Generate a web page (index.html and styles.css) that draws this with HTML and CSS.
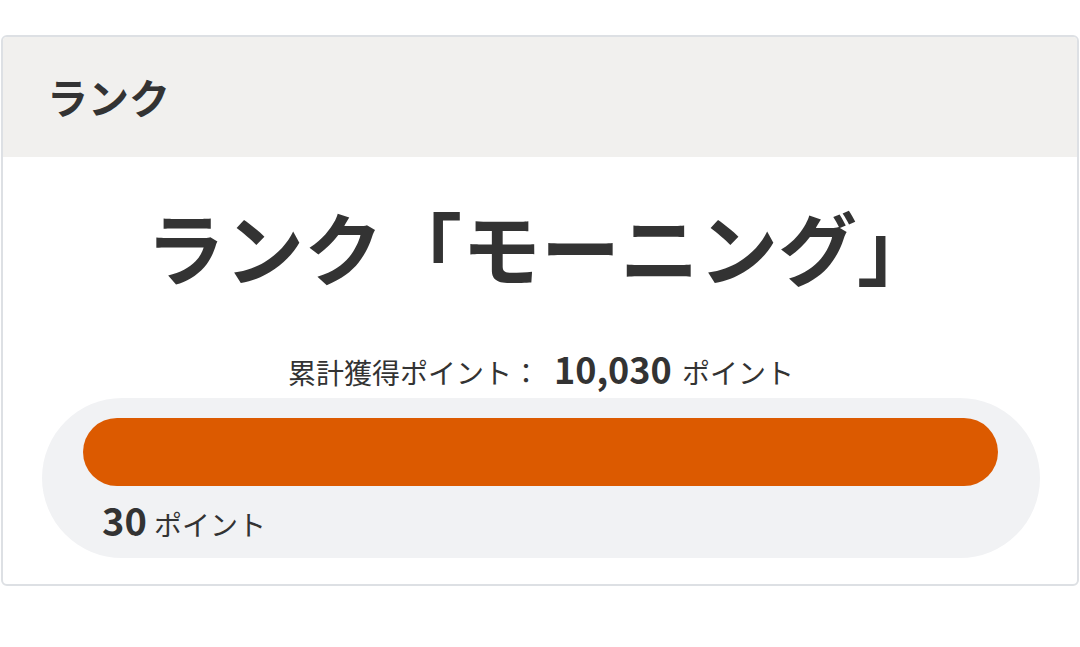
FILE: index.html
```html
<!DOCTYPE html>
<html lang="ja">
<head>
<meta charset="utf-8">
<link rel="stylesheet" href="styles.css">
</head>
<body>
<section class="card">
  <header class="card-header">
    <h2 class="card-title">ランク</h2>
  </header>
  <div class="card-body">
    <p class="rank-name">ランク「モーニング」</p>
    <p class="total">累計獲得ポイント：<span class="total-num">10,030</span> ポイント</p>
    <div class="progress">
      <div class="progress-track">
        <div class="progress-bar" style="width:100%"></div>
      </div>
      <p class="progress-label"><span class="progress-num">30</span> ポイント</p>
    </div>
  </div>
</section>
</body>
</html>
```
FILE: styles.css
```css
* { box-sizing: border-box; }
html, body { margin: 0; padding: 0; background: #ffffff; }
body {
  font-family: "Noto Sans CJK JP", "Noto Sans", sans-serif;
  color: #333333;
  padding: 35px 1px 0 1px;
}
.card {
  border: 2px solid #dde0e4;
  border-radius: 6px;
  overflow: hidden;
  height: 551px;
}
.card-header {
  background: #f1f0ee;
  height: 120px;
  display: flex;
  align-items: center;
  padding-left: 44px;
}
.card-title {
  margin: 0;
  font-size: 41px;
  font-weight: 700;
  line-height: 1.2;
}
.card-body {
  padding: 42px 37px 25px 39px;
}
.rank-name {
  margin: 0;
  text-align: center;
  font-size: 79px;
  font-weight: 700;
  line-height: 94px;
}
.total {
  margin: 51px 0 0 0;
  text-align: center;
  font-size: 28px;
  line-height: 48px;
  height: 48px;
}
.total-num {
  font-size: 36px;
  font-weight: 700;
  margin: 0 4px 0 14px;
}
.progress {
  margin-top: 6px;
  background: #f1f2f4;
  border-radius: 80px;
  height: 160px;
  padding: 20px 42px 0 41px;
}
.progress-track {
  height: 68px;
}
.progress-bar {
  height: 68px;
  background: #dc5a00;
  border-radius: 34px;
}
.progress-label {
  margin: 10px 0 0 19px;
  font-size: 28px;
  line-height: 48px;
}
.progress-num {
  font-size: 38px;
  font-weight: 700;
  margin-right: 1px;
}
```
